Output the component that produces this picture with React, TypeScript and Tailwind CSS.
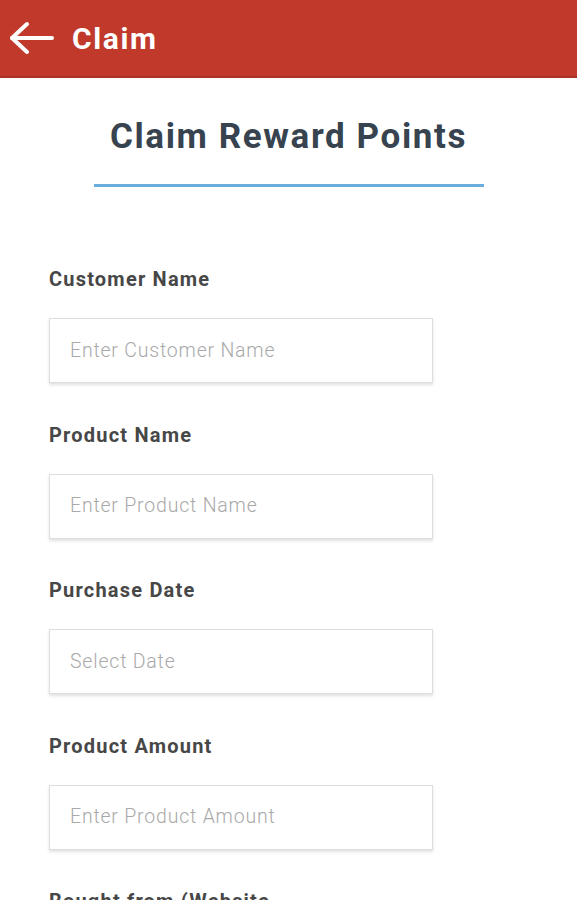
const fields = [
  { label: 'Customer Name', placeholder: 'Enter Customer Name' },
  { label: 'Product Name', placeholder: 'Enter Product Name' },
  { label: 'Purchase Date', placeholder: 'Select Date' },
  { label: 'Product Amount', placeholder: 'Enter Product Amount' },
  { label: 'Bought from (Website', placeholder: 'Enter Website' },
];

export default function App() {
  return (
    <div
      className="w-[577px] h-[900px] overflow-hidden bg-white"
      style={{ fontFamily: 'Roboto, "Noto Sans", sans-serif' }}
    >
      {/* Header */}
      <div className="h-[78px] bg-[#c0392b] border-b-2 border-[#a93226] flex items-center pl-[10px]">
        <svg width="44" height="34" viewBox="0 0 44 34" fill="none" stroke="white" strokeWidth="4" strokeLinecap="round" strokeLinejoin="round">
          <path d="M2 17H42" />
          <path d="M17 3L2 17L17 31" />
        </svg>
        <h1 className="ml-[18px] text-white text-[30px] font-bold tracking-[1.6px]">Claim</h1>
      </div>

      {/* Title */}
      <div className="flex flex-col items-center pt-[36px]">
        <h2 className="text-[35px] leading-[46px] font-bold text-[#37434f] tracking-[1.6px]">
          Claim Reward Points
        </h2>
        <div className="mt-[24px] w-[390px] h-[3px] bg-[#6aaee0]" />
      </div>

      {/* Form */}
      <div className="pl-[49px] pt-[77px] flex flex-col gap-[36.5px]">
        {fields.map((f) => (
          <div key={f.label} className="flex flex-col">
            <label className="text-[20px] leading-[30px] font-bold text-[#474747] tracking-[1.2px]">{f.label}</label>
            <div className="mt-[24px] w-[384px] h-[65px] border border-[#dedede] shadow-[0_2px_3px_rgba(0,0,0,0.12)] flex items-center px-[20px]">
              <span className="text-[19.5px] font-light text-[#a9a9a9] tracking-[0.8px]">{f.placeholder}</span>
            </div>
          </div>
        ))}
      </div>
    </div>
  );
}
